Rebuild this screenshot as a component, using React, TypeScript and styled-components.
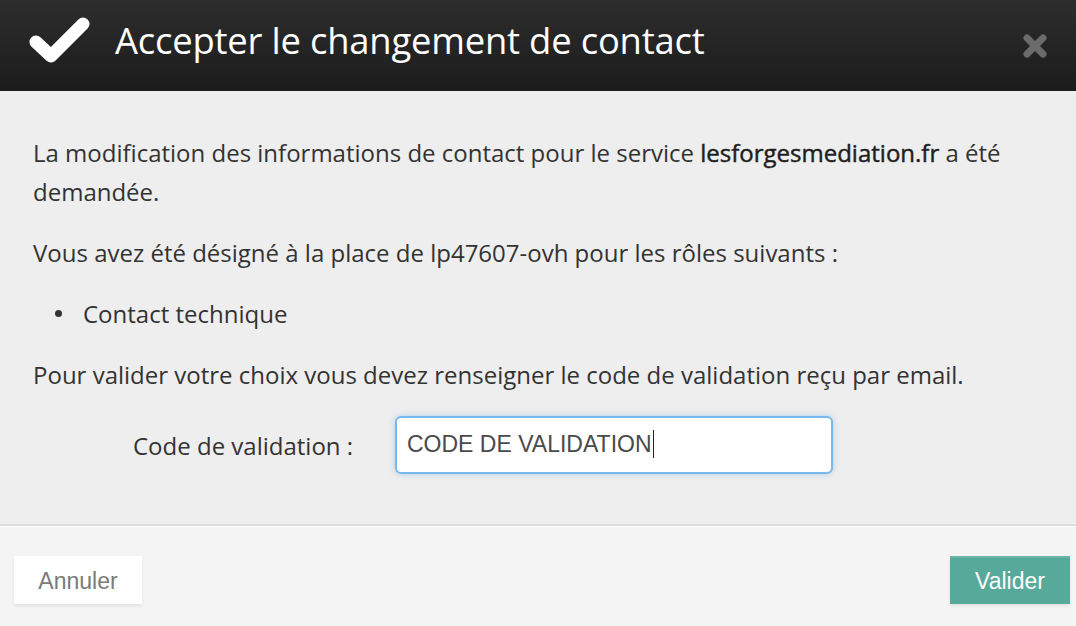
import React from "react";
import styled, { createGlobalStyle } from "styled-components";

const Global = createGlobalStyle`
  html, body { margin: 0; padding: 0; }
  body { width: 1076px; height: 626px; overflow: hidden; background: #f4f4f4; }
  * { box-sizing: border-box; }
`;

const Modal = styled.div`
  width: 1076px;
  height: 626px;
  display: flex;
  flex-direction: column;
  font-family: "Open Sans", "Noto Sans", sans-serif;
`;

const Header = styled.header`
  height: 91px;
  flex: none;
  display: flex;
  align-items: center;
  padding: 0 29px 12px 28px;
  background: linear-gradient(to bottom, #2d2d2d, #1c1c1c);
`;

const Title = styled.h1`
  flex: 1;
  margin: 0 0 0 25px;
  font-size: 36.4px;
  font-weight: 400;
  color: #fff;
  letter-spacing: -0.2px;
`;

const CloseButton = styled.button`
  border: 0;
  background: none;
  padding: 0;
  width: 24px;
  height: 24px;
  cursor: pointer;
  display: flex;
  margin-top: 12px;
`;

const Body = styled.main`
  flex: none;
  height: 435px;
  background: #eeeeee;
  padding: 42px 33px 0;
  color: #333;
  font-size: 24px;
  line-height: 39px;
  border-bottom: 2px solid #dcdcdc;
`;

const Para = styled.p`
  margin: 0 0 22px;
`;

const Strong = styled.strong`
  font-weight: 400;
  color: #1e1e1e;
  -webkit-text-stroke: 0.45px #1e1e1e;
`;

const List = styled.ul`
  margin: 0 0 22px;
  padding: 0 0 0 22px;
  list-style: none;
`;

const Item = styled.li`
  display: flex;
  align-items: center;
  &::before {
    content: "";
    width: 7px;
    height: 7px;
    border-radius: 50%;
    background: #333;
    margin-right: 21px;
    flex: none;
  }
`;

const FormRow = styled.div`
  display: flex;
  align-items: center;
  padding-left: 100px;
  margin-top: 18px;
`;

const Label = styled.label`
  width: 262px;
  flex: none;
`;

const FakeInput = styled.div`
  width: 438px;
  height: 58px;
  background: #fff;
  border: 2px solid #78b8ec;
  border-radius: 6px;
  box-shadow: 0 0 6px rgba(120, 180, 236, 0.55);
  display: flex;
  align-items: center;
  padding: 0 0 2px 10px;
  font-family: "Liberation Sans", Arial, sans-serif;
  font-size: 23px;
  color: #4a4a4a;
`;

const Caret = styled.span`
  display: inline-block;
  width: 1px;
  height: 28px;
  background: #222;
  margin-left: 1px;
`;

const Footer = styled.footer`
  flex: 1;
  background: #f4f4f4;
  border-top: 1px solid #fff;
  display: flex;
  justify-content: space-between;
  align-items: flex-start;
  padding: 29px 6px 0 14px;
`;

const Button = styled.button<{ $primary?: boolean }>`
  height: 48px;
  padding: 0 ${(p) => (p.$primary ? "25px" : "23px")};
  min-width: ${(p) => (p.$primary ? "120px" : "128px")};
  border: 0;
  border-top: 2px solid ${(p) => (p.$primary ? "#6ab4a6" : "#fff")};
  background: ${(p) => (p.$primary ? "#57a99a" : "#fff")};
  color: ${(p) => (p.$primary ? "#fff" : "#7a7a7a")};
  font-family: "Liberation Sans", Arial, sans-serif;
  font-size: 23px;
  box-shadow: 0 2px 3px rgba(0, 0, 0, 0.08);
  cursor: pointer;
`;

export default function App() {
  return (
    <Modal>
      <Global />
      <Header>
        <svg width="62" height="50" viewBox="0 0 62 50" aria-hidden="true">
          <polyline
            points="8,27 23,41 55,9"
            fill="none"
            stroke="#fff"
            strokeWidth="13"
            strokeLinecap="round"
            strokeLinejoin="round"
          />
        </svg>
        <Title>Accepter le changement de contact</Title>
        <CloseButton aria-label="Fermer">
          <svg width="24" height="24" viewBox="0 0 24 24">
            <path
              d="M4 4 L20 20 M20 4 L4 20"
              stroke="#6b6b6b"
              strokeWidth="7"
              strokeLinecap="round"
            />
          </svg>
        </CloseButton>
      </Header>
      <Body>
        <Para>
          La modification des informations de contact pour le service{" "}
          <Strong>lesforgesmediation.fr</Strong> a été demandée.
        </Para>
        <Para>
          Vous avez été désigné à la place de lp47607-ovh pour les rôles suivants :
        </Para>
        <List>
          <Item>Contact technique</Item>
        </List>
        <Para>
          Pour valider votre choix vous devez renseigner le code de validation reçu par email.
        </Para>
        <FormRow>
          <Label>Code de validation :</Label>
          <FakeInput role="textbox">
            CODE DE VALIDATION
            <Caret />
          </FakeInput>
        </FormRow>
      </Body>
      <Footer>
        <Button>Annuler</Button>
        <Button $primary>Valider</Button>
      </Footer>
    </Modal>
  );
}
